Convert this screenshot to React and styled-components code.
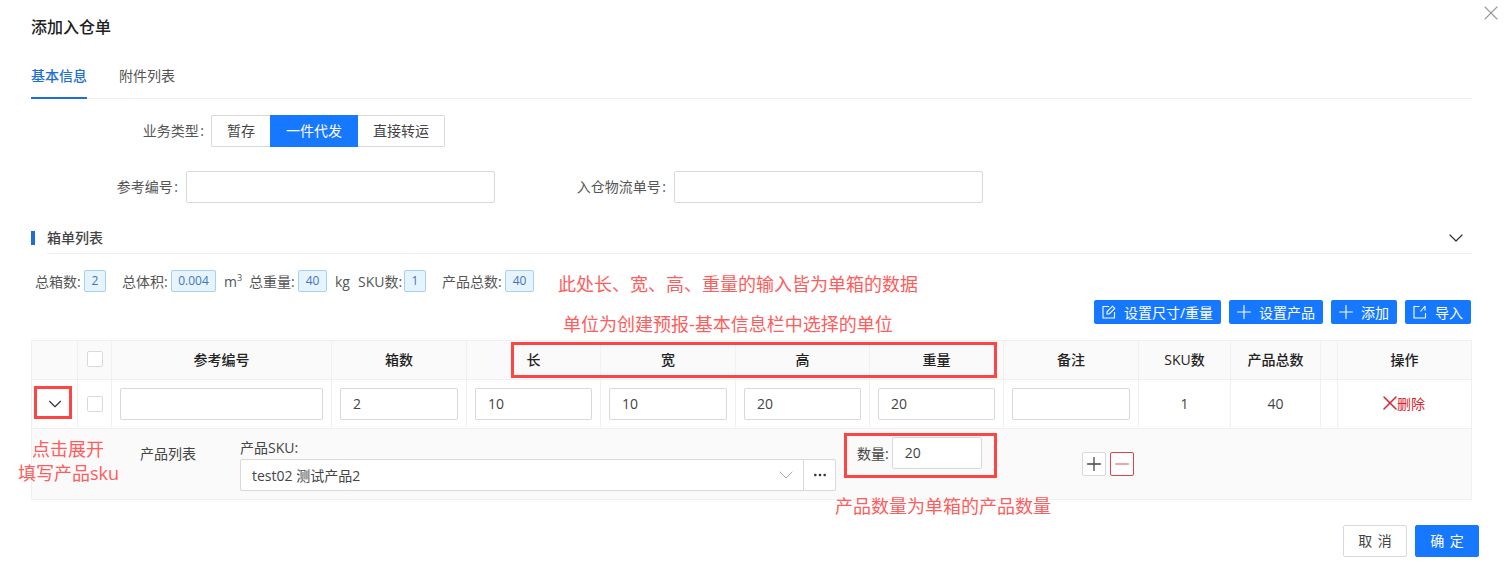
import React from "react";
import styled, { createGlobalStyle } from "styled-components";
import { ChevronDown, Plus, Minus, X, MoreHorizontal } from "lucide-react";

const GlobalStyle = createGlobalStyle`
  html, body {
    margin: 0;
    padding: 0;
    background: #fff;
  }
  * {
    box-sizing: border-box;
  }
  body {
    font-family: "Open Sans", "Noto Sans CJK SC", sans-serif;
    font-size: 14px;
    color: #333;
  }
`;

const Dialog = styled.div`
  position: relative;
  width: 1510px;
  height: 568px;
  padding: 0 31px;
  overflow: hidden;
`;

const CloseButton = styled.div`
  position: absolute;
  top: 1px;
  right: 7px;
  color: #999;
  display: flex;
`;

const Title = styled.div`
  height: 54px;
  line-height: 54px;
  font-size: 16px;
  font-weight: 500;
  color: #222;
`;

const Tabs = styled.div`
  display: flex;
  gap: 32px;
  height: 45px;
  margin-right: 7px;
  border-bottom: 1px solid #eee;
`;

const Tab = styled.div`
  height: 45px;
  line-height: 43px;
  color: ${(p) => (p.$active ? "#1b6fd6" : "#555")};
  border-bottom: 2px solid ${(p) => (p.$active ? "#1b6fd6" : "transparent")};
  font-weight: ${(p) => (p.$active ? 500 : 400)};
`;

const FormRow = styled.div`
  display: flex;
  align-items: center;
  height: 32px;
  margin-top: ${(p) => p.$top}px;
`;

const FormLabel = styled.div`
  width: ${(p) => p.$width}px;
  margin-left: ${(p) => p.$left || 0}px;
  margin-right: ${(p) => p.$gap}px;
  padding-bottom: 2px;
  text-align: right;
  word-spacing: -2px;
  color: #555;
  white-space: nowrap;
`;

const Segment = styled.div`
  display: flex;
  height: 32px;
`;

const SegmentItem = styled.div`
  width: ${(p) => p.$width}px;
  line-height: 29px;
  text-align: center;
  color: ${(p) => (p.$active ? "#fff" : "#444")};
  background: ${(p) => (p.$active ? "#1677ff" : "#fff")};
  border: 1px solid ${(p) => (p.$active ? "#1677ff" : "#d9d9d9")};
  border-left-width: ${(p) => (p.$first || p.$active ? 1 : 0)}px;
  border-right-width: ${(p) => (p.$next ? 0 : 1)}px;
  border-radius: ${(p) => (p.$first ? "2px 0 0 2px" : p.$last ? "0 2px 2px 0" : "0")};
`;

const TextBox = styled.div`
  width: ${(p) => (p.$width ? `${p.$width}px` : "100%")};
  height: 32px;
  line-height: 30px;
  padding: 0 12px;
  text-align: left;
  background: #fff;
  border: 1px solid #d9d9d9;
  border-radius: 2px;
  color: #444;
`;

const Section = styled.div`
  display: flex;
  margin-top: 20px;
  margin-right: 7px;
`;

const SectionBar = styled.div`
  width: 4px;
  height: 14px;
  margin: 8px 12px 0 0;
  background: #1b6fd6;
`;

const SectionBody = styled.div`
  flex: 1;
  height: 31px;
  line-height: 30px;
  display: flex;
  align-items: center;
  justify-content: space-between;
  padding-right: 4px;
  border-bottom: 1px solid #eee;
  font-size: 14px;
  font-weight: 500;
  color: #444;
`;

const Stats = styled.div`
  display: flex;
  align-items: center;
  height: 22px;
  margin-top: 16px;
  padding-left: 4px;
  color: #555;
`;

const StatLabel = styled.span`
  width: ${(p) => p.$width}px;
  margin-left: ${(p) => p.$left || 0}px;
  white-space: nowrap;
`;

const StatTag = styled.span`
  width: ${(p) => p.$width}px;
  height: 22px;
  line-height: 20px;
  text-align: center;
  font-size: 12px;
  color: #3f74c0;
  background: #e6f4ff;
  border: 1px solid #a8d0f0;
  border-radius: 2px;
`;

const StatUnit = styled.span`
  width: ${(p) => p.$width}px;
  margin-left: 8px;
  white-space: nowrap;
  sup {
    font-size: 9px;
    line-height: 0;
  }
`;

const Toolbar = styled.div`
  display: flex;
  justify-content: flex-end;
  gap: 8px;
  height: 24px;
  margin-top: 8px;
  margin-right: 8px;
`;

const ToolButton = styled.div`
  display: flex;
  align-items: center;
  justify-content: center;
  gap: 8px;
  width: ${(p) => p.$width}px;
  height: 24px;
  padding-bottom: 1px;
  color: #fff;
  background: #1677ff;
  border-radius: 2px;
  white-space: nowrap;
`;

const ToolPlus = styled(Plus)`
  margin: -4px;
`;

const Table = styled.table`
  width: 1441px;
  margin-top: 16px;
  table-layout: fixed;
  border-collapse: collapse;
`;

const HeadCell = styled.th`
  height: 39px;
  padding: 0 0 2px;
  text-align: center;
  font-weight: 500;
  color: #222;
  background: #fafafa;
  border: 1px solid #f0f0f0;
`;

const BodyCell = styled.td`
  height: 49px;
  padding: 0 8px ${(p) => (p.$text ? 2 : 0)}px;
  text-align: center;
  color: #444;
  border: 1px solid #f0f0f0;
`;

const ExpandCell = styled.td`
  height: 70px;
  padding: 0;
  background: #fafafa;
  border: 1px solid #f0f0f0;
`;

const RowChevron = styled(ChevronDown)`
  display: block;
  margin-left: 4px;
`;

const CheckBox = styled.div`
  width: 16px;
  height: 16px;
  margin: 0 auto;
  background: #fff;
  border: 1px solid #d9d9d9;
  border-radius: 2px;
`;

const DeleteLink = styled.div`
  display: flex;
  align-items: center;
  justify-content: center;
  color: #d9232e;
`;

const DeleteIcon = styled(X)`
  margin: -6px -5px -6px -6px;
`;

const ExpandRow = styled.div`
  display: flex;
  height: 70px;
  padding-left: 108px;
  text-align: left;
`;

const ProductLabel = styled.div`
  width: 100px;
  margin-top: 14px;
  color: #444;
`;

const SkuField = styled.div`
  width: 596px;
  margin-top: 8px;
`;

const SkuLabel = styled.div`
  height: 22px;
  line-height: 22px;
  color: #444;
`;

const SkuSelect = styled.div`
  display: flex;
  height: 32px;
  background: #fff;
  border: 1px solid #d9d9d9;
  border-radius: 2px;
`;

const SkuValue = styled.div`
  flex: 1;
  display: flex;
  align-items: center;
  justify-content: space-between;
  padding: 0 5px 0 11px;
  color: #444;
`;

const SkuMore = styled.div`
  width: 32px;
  display: flex;
  align-items: center;
  justify-content: center;
  color: #333;
  border-left: 1px solid #d9d9d9;
`;

const QtyField = styled.div`
  display: flex;
  align-items: center;
  gap: 3px;
  height: 32px;
  margin: 8px 0 0 21px;
  color: #444;
`;

const IconButtons = styled.div`
  display: flex;
  gap: 4px;
  margin: 23px 0 0 100px;
`;

const IconButton = styled.div`
  display: flex;
  align-items: center;
  justify-content: center;
  width: 24px;
  height: 24px;
  background: #fff;
  color: ${(p) => (p.$danger ? "#e58a8f" : "#444")};
  border: 1px solid ${(p) => (p.$danger ? "#d9434b" : "#d9d9d9")};
  border-radius: 2px;
`;

const Footer = styled.div`
  display: flex;
  justify-content: flex-end;
  gap: 8px;
  margin-top: 25px;
`;

const FooterButton = styled.div`
  width: 64px;
  height: 32px;
  line-height: 30px;
  text-align: center;
  word-spacing: 2px;
  color: ${(p) => (p.$primary ? "#fff" : "#444")};
  background: ${(p) => (p.$primary ? "#1677ff" : "#fff")};
  border: 1px solid ${(p) => (p.$primary ? "#1677ff" : "#d9d9d9")};
  border-radius: 2px;
`;

const Note = styled.div`
  position: absolute;
  left: ${(p) => p.$x}px;
  top: ${(p) => p.$y}px;
  font-size: 18px;
  line-height: 24px;
  color: #ff5c5c;
  white-space: nowrap;
`;

const RedBox = styled.div`
  position: absolute;
  left: ${(p) => p.$x}px;
  top: ${(p) => p.$y}px;
  width: ${(p) => p.$w}px;
  height: ${(p) => p.$h}px;
  border: 3px solid #ff4444;
`;

const EditIcon = () => (
  <svg width="14" height="14" viewBox="0 0 14 14" fill="none" stroke="currentColor" strokeWidth="1.1">
    <path d="M7 1.5H1v11.5h11.500V7" />
    <path d="M5 9V6.800L10.500 1.200 12.800 3.500 7.200 9z" />
  </svg>
);

const ImportIcon = () => (
  <svg width="14" height="14" viewBox="0 0 14 14" fill="none" stroke="currentColor" strokeWidth="1.1">
    <path d="M6.500 1.500H1v11.500h11.500V8" />
    <path d="M12 1v4.500M12 1 7.500 6.500" />
  </svg>
);

const columns = [46, 34, 220, 135, 134, 135, 134, 134, 135, 92, 90, 17, 134];

const App = () => {
  return (
    <Dialog>
      <GlobalStyle />
      <CloseButton>
        <X size={24} strokeWidth={1.1} />
      </CloseButton>
      <Title>添加入仓单</Title>
      <Tabs>
        <Tab $active>基本信息</Tab>
        <Tab>附件列表</Tab>
      </Tabs>

      <FormRow $top={16}>
        <FormLabel $width={173} $gap={7}>业务类型 :</FormLabel>
        <Segment>
          <SegmentItem $width={59} $first $next>暂存</SegmentItem>
          <SegmentItem $width={88} $active>一件代发</SegmentItem>
          <SegmentItem $width={87} $last>直接转运</SegmentItem>
        </Segment>
      </FormRow>

      <FormRow $top={24}>
        <FormLabel $width={147} $gap={8}>参考编号 :</FormLabel>
        <TextBox $width={309} />
        <FormLabel $width={90} $left={81} $gap={8}>入仓物流单号 :</FormLabel>
        <TextBox $width={309} />
      </FormRow>

      <Section>
        <SectionBar />
        <SectionBody>
          箱单列表
          <ChevronDown size={24} strokeWidth={1.2} color="#333" />
        </SectionBody>
      </Section>

      <Stats>
        <StatLabel $width={49}>总箱数:</StatLabel>
        <StatTag $width={22}>2</StatTag>
        <StatLabel $width={49} $left={16}>总体积:</StatLabel>
        <StatTag $width={45}>0.004</StatTag>
        <StatUnit $width={17}>m<sup>3</sup></StatUnit>
        <StatLabel $width={49} $left={8}>总重量:</StatLabel>
        <StatTag $width={29}>40</StatTag>
        <StatUnit $width={15}>kg</StatUnit>
        <StatLabel $width={46} $left={8}>SKU数:</StatLabel>
        <StatTag $width={22}>1</StatTag>
        <StatLabel $width={63} $left={16}>产品总数:</StatLabel>
        <StatTag $width={29}>40</StatTag>
      </Stats>

      <Toolbar>
        <ToolButton $width={127}><EditIcon />设置尺寸/重量</ToolButton>
        <ToolButton $width={94}><ToolPlus size={22} strokeWidth={1.2} />设置产品</ToolButton>
        <ToolButton $width={66}><ToolPlus size={22} strokeWidth={1.2} />添加</ToolButton>
        <ToolButton $width={66}><ImportIcon />导入</ToolButton>
      </Toolbar>

      <Table>
        <colgroup>
          {columns.map((width, index) => (
            <col key={index} width={width} />
          ))}
        </colgroup>
        <thead>
          <tr>
            <HeadCell />
            <HeadCell><CheckBox /></HeadCell>
            <HeadCell>参考编号</HeadCell>
            <HeadCell>箱数</HeadCell>
            <HeadCell>长</HeadCell>
            <HeadCell>宽</HeadCell>
            <HeadCell>高</HeadCell>
            <HeadCell>重量</HeadCell>
            <HeadCell>备注</HeadCell>
            <HeadCell>SKU数</HeadCell>
            <HeadCell>产品总数</HeadCell>
            <HeadCell />
            <HeadCell>操作</HeadCell>
          </tr>
        </thead>
        <tbody>
          <tr>
            <BodyCell><RowChevron size={22} strokeWidth={1.2} color="#333" /></BodyCell>
            <BodyCell><CheckBox /></BodyCell>
            <BodyCell><TextBox /></BodyCell>
            <BodyCell><TextBox>2</TextBox></BodyCell>
            <BodyCell><TextBox>10</TextBox></BodyCell>
            <BodyCell><TextBox>10</TextBox></BodyCell>
            <BodyCell><TextBox>20</TextBox></BodyCell>
            <BodyCell><TextBox>20</TextBox></BodyCell>
            <BodyCell><TextBox /></BodyCell>
            <BodyCell $text>1</BodyCell>
            <BodyCell $text>40</BodyCell>
            <BodyCell />
            <BodyCell $text>
              <DeleteLink><DeleteIcon size={24} strokeWidth={1.5} />删除</DeleteLink>
            </BodyCell>
          </tr>
          <tr>
            <ExpandCell colSpan={13}>
              <ExpandRow>
                <ProductLabel>产品列表</ProductLabel>
                <SkuField>
                  <SkuLabel>产品SKU:</SkuLabel>
                  <SkuSelect>
                    <SkuValue>
                      test02 测试产品2
                      <ChevronDown size={24} strokeWidth={1} color="#aaa" />
                    </SkuValue>
                    <SkuMore><MoreHorizontal size={16} /></SkuMore>
                  </SkuSelect>
                </SkuField>
                <QtyField>
                  数量:
                  <TextBox $width={90}>20</TextBox>
                </QtyField>
                <IconButtons>
                  <IconButton><Plus size={22} strokeWidth={1.4} /></IconButton>
                  <IconButton $danger><Minus size={22} strokeWidth={1.4} /></IconButton>
                </IconButtons>
              </ExpandRow>
            </ExpandCell>
          </tr>
        </tbody>
      </Table>

      <Footer>
        <FooterButton>取 消</FooterButton>
        <FooterButton $primary>确 定</FooterButton>
      </Footer>

      <Note $x={558} $y={272}>此处长、宽、高、重量的输入皆为单箱的数据</Note>
      <Note $x={563} $y={312}>单位为创建预报-基本信息栏中选择的单位</Note>
      <Note $x={32} $y={437}>点击展开</Note>
      <Note $x={18} $y={461}>填写产品sku</Note>
      <Note $x={835} $y={494}>产品数量为单箱的产品数量</Note>
      <RedBox $x={34} $y={386} $w={38} $h={33} />
      <RedBox $x={511} $y={342} $w={486} $h={36} />
      <RedBox $x={844} $y={433} $w={153} $h={45} />
    </Dialog>
  );
};

export default App;
